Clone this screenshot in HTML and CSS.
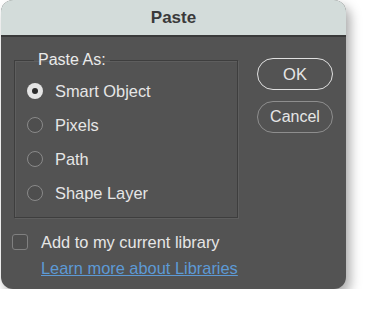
FILE: index.html
```html
<!DOCTYPE html>
<html>
<head>
<meta charset="utf-8">
<link rel="stylesheet" href="styles.css">
</head>
<body>
<div class="dialog">
  <div class="titlebar">Paste</div>
  <div class="body">
    <div class="main">
      <fieldset class="group">
        <legend>Paste As:</legend>
        <label class="radio-row"><span class="radio checked"></span>Smart Object</label>
        <label class="radio-row"><span class="radio"></span>Pixels</label>
        <label class="radio-row"><span class="radio"></span>Path</label>
        <label class="radio-row"><span class="radio"></span>Shape Layer</label>
      </fieldset>
      <div class="check-row"><span class="checkbox"></span>Add to my current library</div>
      <a class="link" href="#">Learn more about Libraries</a>
    </div>
    <div class="buttons">
      <button class="btn primary">OK</button>
      <button class="btn">Cancel</button>
    </div>
  </div>
</div>
</body>
</html>
```
FILE: styles.css
```css
html, body {
  margin: 0;
  padding: 0;
  background: #ffffff;
}
body {
  font-family: "Liberation Sans", Arial, sans-serif;
}
.dialog {
  margin-left: 1px;
  width: 345px;
  height: 289px;
  border-radius: 12px;
  overflow: hidden;
  background: #535353;
  box-shadow: 4px 6px 12px rgba(0,0,0,0.35);
  display: flex;
  flex-direction: column;
}
.titlebar {
  height: 35px;
  background: #d3dcda;
  border-bottom: 2px solid #3a3a3a;
  color: #3a3a3a;
  font-weight: bold;
  font-size: 17px;
  line-height: 35px;
  text-align: center;
}
.body {
  display: flex;
  flex: 1;
}
.main {
  padding-left: 12px;
  width: 226px;
}
.group {
  margin: 14px 0 0 1px;
  padding: 5px 0 7px 12px;
  width: 210px;
  border: 1px solid #3e3e3e;
  box-shadow: inset 1px 1px 0 #5e5e5e, 1px 1px 0 #5e5e5e;
  box-sizing: content-box;
}
.group legend {
  color: #eaeaea;
  font-size: 16px;
  line-height: 18px;
  padding: 0 4px;
  margin-left: 7px;
}
.radio-row {
  display: flex;
  align-items: center;
  height: 34px;
  color: #e6e6e6;
  font-size: 16.4px;
  gap: 12px;
}
.radio {
  width: 14px;
  height: 14px;
  border-radius: 50%;
  border: 1px solid #8a8a8a;
  background: #4e4e4e;
  flex: none;
  position: relative;
}
.radio.checked {
  width: 16px;
  height: 16px;
  border: none;
  background: #e4e4e4;
}
.radio.checked::after {
  content: "";
  position: absolute;
  left: 5px;
  top: 5px;
  width: 6px;
  height: 6px;
  border-radius: 50%;
  background: #2b2b2b;
}
.check-row {
  display: flex;
  align-items: center;
  gap: 13px;
  margin-top: 15px;
  margin-left: -1px;
  height: 18px;
  color: #e6e6e6;
  font-size: 16.4px;
}
.checkbox {
  width: 14px;
  height: 14px;
  border: 1.5px solid #808080;
  border-radius: 3px;
  background: #4e4e4e;
  flex: none;
}
.link {
  display: block;
  margin: 8px 0 0 28px;
  color: #5d9ad6;
  font-size: 16.4px;
  line-height: 18px;
  text-decoration: underline;
  white-space: nowrap;
}
.buttons {
  display: flex;
  flex-direction: column;
  gap: 11px;
  padding-top: 21px;
  margin-left: 18px;
}
.btn {
  width: 76px;
  height: 32px;
  border-radius: 16px;
  background: transparent;
  border: 1.5px solid #8e8e8e;
  color: #e6e6e6;
  font-family: "Liberation Sans", Arial, sans-serif;
  font-size: 16px;
  padding: 0;
}
.btn.primary {
  border-color: #e0e0e0;
  font-size: 16.5px;
}
```
